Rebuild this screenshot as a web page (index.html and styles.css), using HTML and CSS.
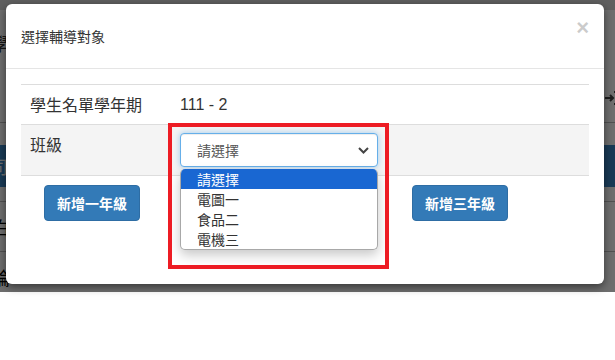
FILE: index.html
```html
<!DOCTYPE html>
<html lang="zh-Hant">
<head>
  <meta charset="UTF-8">
  <meta name="viewport" content="width=device-width, initial-scale=1.0">
  <title>選擇輔導對象</title>
  <link rel="stylesheet" href="styles.css">
</head>
<body>
  <div class="page">
    <div class="topbar"></div>
    <div class="crumbs">
      <span class="crumb-text">學</span>
      <svg class="exit-icon" width="14" height="14" viewBox="0 0 14 14">
        <path d="M0 7h8M5 4l3 3-3 3" stroke="#444" stroke-width="2" fill="none"/>
        <path d="M9 1h4v12H9" stroke="#444" stroke-width="2" fill="none"/>
      </svg>
    </div>
    <div class="bar"><span class="bar-text">司</span></div>
    <div class="bg-row short"></div>
    <div class="bg-row"><span class="bg-text">白</span></div>
    <div class="bg-row last"><span class="bg-text">論</span></div>
    <div class="backdrop"></div>
  </div>

  <div class="modal">
    <div class="modal-header">
      <h4 class="modal-title">選擇輔導對象</h4>
      <span class="close">&times;</span>
    </div>
    <div class="modal-body">
      <table class="info-table">
        <tr>
          <th>學生名單學年期</th>
          <td class="year">111 - 2</td>
        </tr>
        <tr class="striped">
          <th>班級</th>
          <td>
            <div class="select-box">
              <span>請選擇</span>
              <svg width="11" height="7" viewBox="0 0 11 7">
                <path d="M1 1l4.5 4.5L10 1" stroke="#444" stroke-width="2" fill="none"/>
              </svg>
            </div>
          </td>
        </tr>
      </table>
      <div class="btn-row">
        <button class="btn">新增一年級</button>
        <button class="btn">新增二年級</button>
        <button class="btn">新增三年級</button>
      </div>
    </div>

    <ul class="dropdown">
      <li class="selected">請選擇</li>
      <li>電圖一</li>
      <li>食品二</li>
      <li>電機三</li>
    </ul>
    <div class="highlight"></div>
  </div>
</body>
</html>
```

FILE: styles.css
```css
body {
  margin: 0;
  background: #fff;
  font-family: "Noto Sans CJK TC", "Liberation Sans", sans-serif;
  color: #333;
}
.page {
  position: relative;
  height: 292px;
  overflow: hidden;
  background: #fff;
}
.topbar {
  height: 10px;
  background: #dcdcdc;
}
.crumbs {
  position: relative;
  height: 112px;
  border-bottom: 1px solid #bbb;
}
.crumb-text {
  position: absolute;
  left: -9px;
  top: 20px;
  font-size: 18px;
}
.exit-icon {
  position: absolute;
  right: -4px;
  top: 81px;
}
.bar {
  margin-top: 22px;
  height: 42px;
  background: #3a86c8;
  color: #fff;
  font-size: 18px;
  line-height: 42px;
  text-indent: -10px;
}
.bg-row {
  height: 49px;
  border-bottom: 1px solid #bbb;
  font-size: 18px;
  line-height: 50px;
}
.bg-row.short {
  height: 14px;
}
.bg-row.last {
  height: 60px;
  border-bottom: none;
}
.bg-text {
  margin-left: -8px;
  color: #000;
}
.backdrop {
  position: absolute;
  top: 0;
  left: 0;
  right: 0;
  bottom: 0;
  background: rgba(0, 0, 0, 0.57);
}

.modal {
  position: absolute;
  top: 4px;
  left: 6px;
  width: 598px;
  height: 280px;
  background: #fff;
  border-radius: 6px;
  box-shadow: 0 3px 9px rgba(0, 0, 0, 0.5);
}
.modal-header {
  position: relative;
  padding: 22px 15px;
  border-bottom: 1px solid #e5e5e5;
}
.modal-title {
  margin: 0;
  font-size: 14px;
  font-weight: normal;
  line-height: 20px;
  color: #333;
}
.close {
  position: absolute;
  right: 15px;
  top: 11px;
  font-family: "Liberation Sans", sans-serif;
  font-size: 22px;
  font-weight: bold;
  color: #000;
  opacity: 0.2;
}
.modal-body {
  padding: 15px;
}
.info-table {
  width: 100%;
  border-collapse: collapse;
  font-size: 16px;
}
.info-table th,
.info-table td {
  padding: 8px 9px;
  border-top: 1px solid #ddd;
  line-height: 23px;
  font-weight: normal;
  text-align: left;
  vertical-align: top;
}
.info-table th {
  width: 133px;
}
.info-table .year {
  font-family: "Liberation Sans", sans-serif;
  padding-left: 8px;
}
.info-table tr.striped th,
.info-table tr.striped td {
  background: #f4f4f4;
  border-bottom: 1px solid #ddd;
}
.info-table tr.striped td {
  padding-left: 8px;
}
.select-box {
  box-sizing: border-box;
  width: 198px;
  height: 34px;
  padding: 0 8px 0 16px;
  display: flex;
  align-items: center;
  justify-content: space-between;
  background: #fff;
  border: 1px solid #66afe9;
  border-radius: 4px;
  box-shadow: inset 0 1px 1px rgba(0, 0, 0, 0.075), 0 0 6px rgba(102, 175, 233, 0.6);
  font-size: 14px;
  color: #555;
}
.btn-row {
  display: flex;
  gap: 88px;
  margin-top: 9px;
  padding-left: 23px;
}
.btn {
  width: 96px;
  height: 36px;
  padding: 0;
  border: 1px solid #2e6da4;
  border-radius: 4px;
  background: #337ab7;
  color: #fff;
  font-family: "Noto Sans CJK TC", sans-serif;
  font-size: 14px;
  font-weight: bold;
}

.dropdown {
  position: absolute;
  top: 165px;
  left: 174px;
  width: 198px;
  margin: 0;
  padding: 0;
  list-style: none;
  box-sizing: border-box;
  background: #fff;
  border: 1px solid #a8a8a8;
  border-top: none;
  border-radius: 5px;
  box-shadow: 0 5px 12px rgba(0, 0, 0, 0.22);
  overflow: hidden;
  font-size: 14px;
}
.dropdown li {
  height: 20px;
  line-height: 20px;
  padding-left: 16px;
  color: #333;
}
.dropdown li.selected {
  background: #1967d2;
  color: #fff;
}
.highlight {
  position: absolute;
  top: 119px;
  left: 162px;
  width: 213px;
  height: 138px;
  border: 4px solid #ed1c24;
}
```
